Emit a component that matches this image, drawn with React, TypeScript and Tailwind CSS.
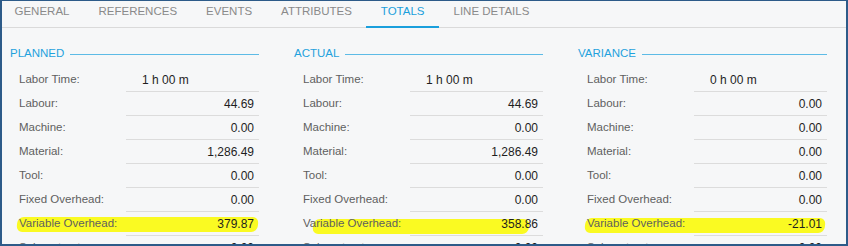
import React from 'react';

type Row = { label: string; value: string };
type Section = {
  title: string;
  labor: string;
  rows: Row[];
  // highlighter stroke on the Variable Overhead line (offsets inside the column)
  mark: { left: number; width: number; top: number };
};

const sections: Section[] = [
  {
    title: 'PLANNED',
    labor: '1 h 00 m',
    rows: [
      { label: 'Labour:', value: '44.69' },
      { label: 'Machine:', value: '0.00' },
      { label: 'Material:', value: '1,286.49' },
      { label: 'Tool:', value: '0.00' },
      { label: 'Fixed Overhead:', value: '0.00' },
      { label: 'Variable Overhead:', value: '379.87' },
      { label: 'Subcontract:', value: '0.00' },
    ],
    mark: { left: 7, width: 241, top: 5 },
  },
  {
    title: 'ACTUAL',
    labor: '1 h 00 m',
    rows: [
      { label: 'Labour:', value: '44.69' },
      { label: 'Machine:', value: '0.00' },
      { label: 'Material:', value: '1,286.49' },
      { label: 'Tool:', value: '0.00' },
      { label: 'Fixed Overhead:', value: '0.00' },
      { label: 'Variable Overhead:', value: '358.86' },
      { label: 'Subcontract:', value: '0.00' },
    ],
    mark: { left: 19, width: 216, top: 7 },
  },
  {
    title: 'VARIANCE',
    labor: '0 h 00 m',
    rows: [
      { label: 'Labour:', value: '0.00' },
      { label: 'Machine:', value: '0.00' },
      { label: 'Material:', value: '0.00' },
      { label: 'Tool:', value: '0.00' },
      { label: 'Fixed Overhead:', value: '0.00' },
      { label: 'Variable Overhead:', value: '-21.01' },
      { label: 'Subcontract:', value: '0.00' },
    ],
    mark: { left: 7, width: 240, top: 6 },
  },
];

const tabs = ['GENERAL', 'REFERENCES', 'EVENTS', 'ATTRIBUTES', 'TOTALS', 'LINE DETAILS'];

const TotalsColumn: React.FC<{ section: Section }> = ({ section }) => (
  <div className="w-[249px]">
    <div className="flex items-center h-[16px]">
      <span className="text-[11.5px] leading-[16px] text-[#1fa2dd]">{section.title}</span>
      <div className="flex-1 h-px bg-[#5dbbe6] ml-[6px] mt-[2px]" />
    </div>
    <div className="mt-[7px]">
      <div className="flex h-[24px] items-center">
        <div className="w-[116px] pl-[9px] text-[11.5px] text-[#5f5f5f]">Labor Time:</div>
        <div className="flex-1 h-[24px] border-b border-[#dcdcdc] pl-[16px] flex items-center text-[12px] text-[#1e1e1e]">
          {section.labor}
        </div>
      </div>
      {section.rows.map((row) => {
        const marked = row.label === 'Variable Overhead:';
        return (
          <div key={row.label} className="relative flex h-[24px] items-center">
            {marked && (
              <div
                className="absolute h-[15px] bg-[#fafa22] rounded-[6px] -skew-x-6"
                style={{ left: section.mark.left, width: section.mark.width, top: section.mark.top }}
              />
            )}
            <div className="relative w-[116px] pl-[9px] text-[11.5px] text-[#5f5f5f]">{row.label}</div>
            <div className="relative flex-1 h-[24px] border-b border-[#dcdcdc] pr-[5px] flex items-center justify-end text-[12px] text-[#1e1e1e]">
              {row.value}
            </div>
          </div>
        );
      })}
    </div>
  </div>
);

export default function App() {
  return (
    <div
      className="w-[848px] h-[246px] overflow-hidden bg-[#f6f7f8] border-x-2 border-b-2 border-t border-[#2d5b89]"
      style={{ fontFamily: '"Liberation Sans", Arial, sans-serif' }}
    >
      <div className="flex h-[27px] border-b border-[#dadada] -ml-[2px]">
        {tabs.map((tab) => {
          const active = tab === 'TOTALS';
          return (
            <div
              key={tab}
              className={`relative px-[14.5px] pt-[3px] text-[11.5px] leading-[15px] ${
                active ? 'text-[#1a9fdc]' : 'text-[#8a8a8a]'
              }`}
            >
              {tab}
              {active && <div className="absolute left-0 right-0 -bottom-[1px] h-[2px] bg-[#1a9fdc]" />}
            </div>
          );
        })}
      </div>
      <div className="flex gap-[35px] pl-[8px] pt-[17px]">
        {sections.map((s) => (
          <TotalsColumn key={s.title} section={s} />
        ))}
      </div>
    </div>
  );
}
